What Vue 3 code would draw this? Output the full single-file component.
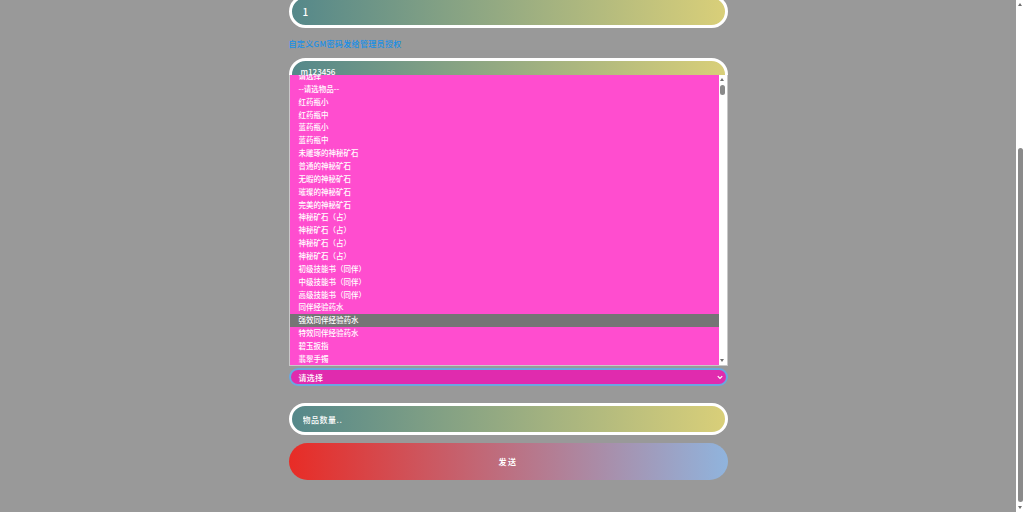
<script setup>
import { ref } from 'vue';

const label = '自定义GM密码发给管理员授权';
const count = ref('');
const items = [
  '请选择',
  '--请选物品--',
  '红药瓶小',
  '红药瓶中',
  '蓝药瓶小',
  '蓝药瓶中',
  '未雕琢的神秘矿石',
  '普通的神秘矿石',
  '无暇的神秘矿石',
  '璀璨的神秘矿石',
  '完美的神秘矿石',
  '神秘矿石（占）',
  '神秘矿石（占）',
  '神秘矿石（占）',
  '神秘矿石（占）',
  '初级技能书（同伴）',
  '中级技能书（同伴）',
  '高级技能书（同伴）',
  '同伴经验药水',
  '强效同伴经验药水',
  '特效同伴经验药水',
  '碧玉扳指',
  '翡翠手镯'
];
const hovered = 19;
</script>

<template>
  <div class="page">
    <div class="form">
      <div class="field first"><span>1</span></div>
      <a class="gm-link">{{ label }}</a>
      <div class="field second"><span>m123456</span></div>

      <div class="dropdown">
        <ul class="options">
          <li v-for="(item, i) in items" :key="i" :class="{ active: i === hovered }">{{ item }}</li>
        </ul>
        <div class="list-scroll">
          <i class="arrow up"></i>
          <b class="list-thumb"></b>
          <i class="arrow down"></i>
        </div>
      </div>
      <div class="select-box">
        <span>请选择</span>
        <svg class="chevron" viewBox="0 0 8 6" width="6" height="5" fill="none" stroke="#fff" stroke-width="1.6">
          <path d="M1 1.2 4 4.2 7 1.2" />
        </svg>
      </div>

      <input class="field count" v-model="count" placeholder="物品数量.." />
      <button class="send">发送</button>
    </div>

    <div class="page-scroll">
      <i class="arrow up"></i>
      <b class="page-thumb"></b>
      <i class="arrow down"></i>
    </div>
  </div>
</template>

<style scoped>
.page {
  display: flex;
  justify-content: center;
  width: 1016px;
  height: 512px;
  overflow: hidden;
  padding-right: 8px;
  background: #999;
  font-family: "Noto Sans CJK SC", "Liberation Sans", sans-serif;
  color: #fff;
}

.form {
  display: flex;
  flex-direction: column;
  width: 439px;
  margin-top: -5.5px;
}

.form > * {
  flex-shrink: 0;
}

.field {
  display: flex;
  align-items: center;
  box-sizing: border-box;
  width: 100%;
  height: 33px;
  padding: 0 11px;
  border: 3px solid #fff;
  border-radius: 20px;
  background: linear-gradient(to right, #55888a, #d9cf79);
  color: #fff;
  font-family: inherit;
  font-size: 8px;
  font-weight: 500;
  letter-spacing: 0.5px;
  outline: none;
}

.first {
  font-size: 10px;
}

.gm-link {
  margin-top: 10px;
  height: 20.5px;
  color: #1890e8;
  font-size: 8px;
  font-weight: 500;
  line-height: 11px;
  letter-spacing: 0.35px;
}

.second {
  align-items: flex-start;
  padding: 5px 9px 0;
  letter-spacing: 0;
  line-height: 11px;
}

.dropdown {
  position: relative;
  display: flex;
  box-sizing: border-box;
  height: 291px;
  margin-top: -16px;
  overflow: hidden;
  border: 1px solid #c8c8c8;
  border-top: none;
  background: #fff;
}

.options {
  flex: 1;
  margin: -5px 0 0;
  padding: 0;
  list-style: none;
  background: #ff4dcf;
}

.options li {
  height: 12.86px;
  padding-left: 9px;
  font-size: 7.5px;
  font-weight: 500;
  line-height: 12.86px;
  white-space: nowrap;
}

.options li.active {
  background: #757575;
}

.list-scroll {
  position: relative;
  width: 8px;
  background: #fff;
}

.list-thumb {
  position: absolute;
  top: 10px;
  left: 1.5px;
  width: 5px;
  height: 10px;
  border-radius: 3px;
  background: #8a8a8a;
}

.select-box {
  display: flex;
  align-items: center;
  justify-content: space-between;
  box-sizing: border-box;
  height: 18px;
  margin-top: 2px;
  margin-bottom: 17px;
  padding: 0 3px 0 8px;
  border: 2px solid #6aa8e0;
  border-radius: 10px;
  background: #e02bae;
  font-size: 8px;
  font-weight: 500;
  letter-spacing: 0.2px;
}

.count {
  height: 32px;
}

.count::placeholder {
  color: #fff;
  opacity: 1;
}

.send {
  height: 37px;
  margin-top: 8px;
  border: none;
  border-radius: 19px;
  background: linear-gradient(to right, #e82c26, #90b4dd);
  color: #fff;
  font-family: inherit;
  font-size: 8px;
  font-weight: 700;
  letter-spacing: 1.5px;
}

.page-scroll {
  position: absolute;
  top: 0;
  right: 0;
  width: 8px;
  height: 512px;
  background: #fff;
}

.page-thumb {
  position: absolute;
  top: 148px;
  left: 1.5px;
  width: 5px;
  height: 354px;
  border-radius: 3px;
  background: #8a8a8a;
}

.arrow {
  position: absolute;
  left: 1.5px;
  width: 0;
  height: 0;
  border-left: 2.5px solid transparent;
  border-right: 2.5px solid transparent;
}

.arrow.up {
  top: 3px;
  border-bottom: 3px solid #707070;
}

.arrow.down {
  bottom: 3px;
  border-top: 3px solid #707070;
}
</style>

<style>
html,
body {
  margin: 0;
  overflow: hidden;
}
</style>
